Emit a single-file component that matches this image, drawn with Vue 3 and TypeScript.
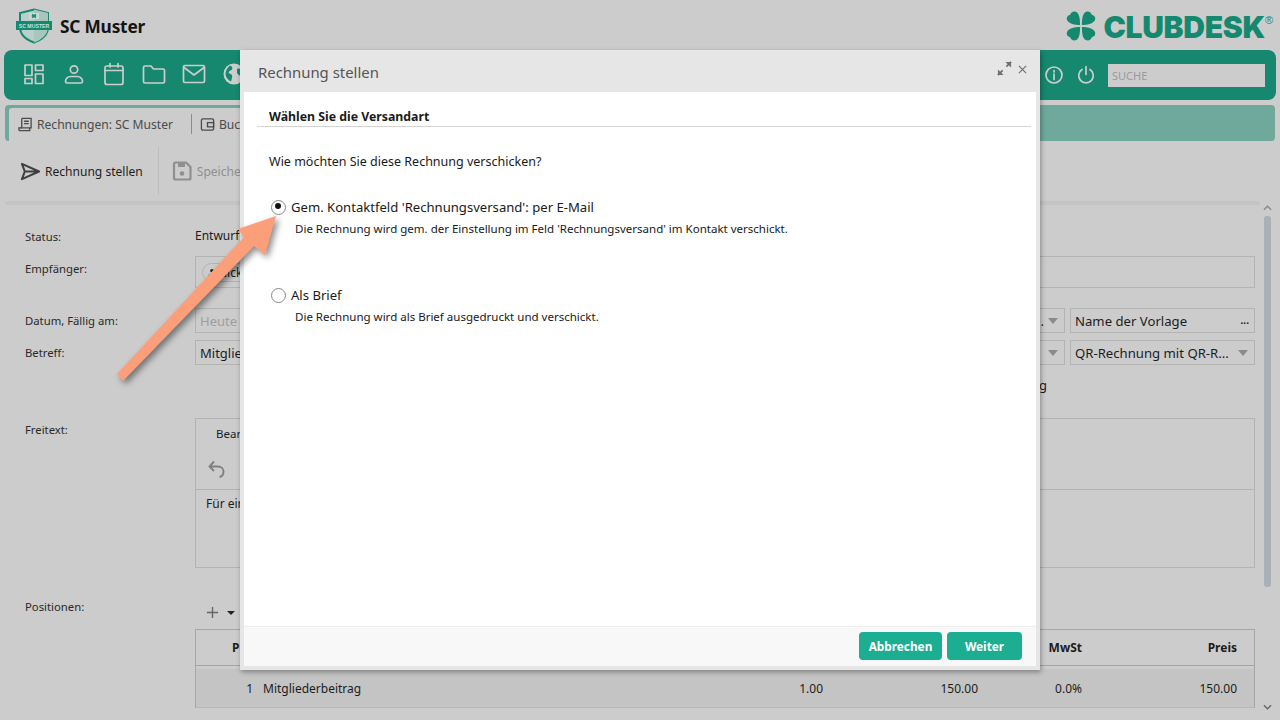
<script setup lang="ts">
const rows = [{ n: 1, name: 'Mitgliederbeitrag', qty: '1.00', unit: '150.00', vat: '0.0%', price: '150.00' }]
</script>

<template>
  <div class="page">
    <header class="top">
      <div class="brand">
        <svg class="shield" viewBox="0 0 38 36" width="38" height="36">
          <path d="M19 1.500 L33 5 V19 C33 27 26 32 19 34.500 C12 32 5 27 5 19 V5 Z" fill="#b9cfc9" stroke="#15896f" stroke-width="2" />
          <path d="M19 1.500 V34.500 C26 32 33 27 33 19 V5 Z" fill="#a9c6be" />
          <path d="M14 5 h10 v6 h-10z" fill="#cfd8d5" />
          <path d="M17 6.500 l4 3 M21 6.500 l-4 3" stroke="#15896f" stroke-width="1.600" />
          <rect x="1" y="13" width="36" height="9" fill="#15896f" />
          <text x="19" y="20" text-anchor="middle" class="shield-text">SC MUSTER</text>
        </svg>
        <span class="club">SC Muster</span>
      </div>
      <div class="clubdesk">
        <svg viewBox="0 0 32 32" width="30" height="30" class="clover">
          <g fill="#15896f">
            <path d="M15 15 C9 15 4 14 1.500 10.500 C-0.500 7 2 4.500 4.500 4 C5 1.500 8 -0.500 11 1 C14.500 3 15 9 15 15Z" />
            <path d="M17 15 C23 15 28 14 30.500 10.500 C32.500 7 30 4.500 27.500 4 C27 1.500 24 -0.500 21 1 C17.500 3 17 9 17 15Z" />
            <path d="M15 17 C9 17 4 18 1.500 21.500 C-0.500 25 2 27.500 4.500 28 C5 30.500 8 32.500 11 31 C14.500 29 15 23 15 17Z" />
            <path d="M17 17 C23 17 28 18 30.500 21.500 C32.500 25 30 27.500 27.500 28 C27 30.500 24 32.500 21 31 C17.500 29 17 23 17 17Z" />
          </g>
        </svg>
        <span class="cd-word">CLUBDESK</span><span class="cd-reg">®</span>
      </div>
    </header>

    <nav class="nav">
      <div class="nav-icons">
        <svg viewBox="0 0 24 24" width="24" height="24"><path d="M3 3h7v10.500H3zM13.500 3H21v5.500h-7.500zM13.500 12H21v9.500h-7.500zM3 16.500h7v5H3z" /></svg>
        <svg viewBox="0 0 24 24" width="24" height="24"><circle cx="12" cy="7.500" r="3.700" /><path d="M3.500 19.500c0-3 2.500-5 5-5h7c2.500 0 5 2 5 5 0 1-.7 1.500-1.500 1.500H5c-.8 0-1.500-.5-1.500-1.500z" /></svg>
        <svg viewBox="0 0 24 24" width="24" height="24"><rect x="3" y="4" width="18" height="18.500" rx="2" /><path d="M3 8.500h18M8 1.500v3.500M16 1.500v3.500" /></svg>
        <svg viewBox="0 0 24 24" width="24" height="24"><path d="M1.500 5.500c0-1 .7-1.500 1.500-1.500h6l2.500 3H21c1 0 1.500.7 1.500 1.500v11c0 1-.7 1.500-1.500 1.500H3c-1 0-1.500-.7-1.500-1.500z" /></svg>
        <svg viewBox="0 0 24 24" width="24" height="24"><rect x="1.500" y="3.500" width="21" height="17" rx="1.500" /><path d="M2 5.500l10 7.500L22 5.500" /></svg>
        <svg viewBox="0 0 24 24" width="24" height="24" class="solid"><circle cx="12" cy="12" r="10.500" /><path class="land" d="M8 3.500c2 1 3 2 2 4l-3 2c-1 1 0 2 1.500 2.500 1.500.5 2 2 1.500 4l-1 3.500c-3-1.500-5-4-5.500-7 0-4 2-7 4.500-9zM15 7c2-1 4 0 6 2l1 3-2 2c-2 0-4-1-5-3z" /></svg>
      </div>
      <div class="nav-right">
        <svg viewBox="0 0 20 20" width="20" height="20"><circle cx="10" cy="10" r="8" /><path d="M10 9v5.500M10 5.500v1.500" /></svg>
        <svg viewBox="0 0 20 20" width="20" height="20"><path d="M6 4.500a7.300 7.300 0 1 0 8 0M10 1.500v8" /></svg>
        <div class="search">SUCHE</div>
      </div>
    </nav>

    <div class="tabs">
      <div class="tab active">
        <svg viewBox="0 0 16 16" width="15" height="15"><path d="M4 1.500h10v10H2.500" /><path d="M4 1.500v10M1 14.500h11.500v-3M1 14.500v-3h3M6.500 4.500h5M6.500 7h5" /></svg>
        <span>Rechnungen: SC Muster</span>
      </div>
      <div class="tab second-tab">
        <svg viewBox="0 0 16 16" width="15" height="15"><rect x="1.500" y="2" width="13" height="12" rx="1.500" /><rect x="8" y="6" width="6.500" height="4.500" /></svg>
        <span>Buc</span>
      </div>
    </div>

    <div class="toolbar">
      <button class="tool">
        <svg viewBox="0 0 22 20" width="21" height="19"><path d="M2 2l18 8-18 8 3-8zM5 10h15" /></svg>
        <span>Rechnung stellen</span>
      </button>
      <button class="tool muted">
        <svg viewBox="0 0 20 20" width="20" height="20"><path d="M2 3c0-1 .6-1.500 1.500-1.500H14L18.500 6v11c0 1-.6 1.500-1.500 1.500H3.500C2.600 18.500 2 18 2 17z" /><rect x="6" y="2" width="7" height="4" class="fillbox" /><circle cx="10" cy="12.500" r="2.300" class="fillbox" /></svg>
        <span>Speichern</span>
      </button>
    </div>
    <div class="rule"></div>

    <main class="form">
      <label class="lbl status-l">Status:</label>
      <div class="status-v">Entwurf</div>

      <label class="lbl">Empfänger:</label>
      <div class="field recipient">
        <span class="chip">
          <svg viewBox="0 0 10 10" width="9" height="9"><circle cx="5.500" cy="3" r="2" /><path d="M1.500 9c0-2 1.500-3 4-3s3 1 3 3z" /></svg>
          Nick Muster
        </span>
      </div>

      <label class="lbl">Datum, Fällig am:</label>
      <div class="split">
        <div class="field small placeholder">Heute</div>
        <div class="field small select narrow"><span class="tail">.</span></div>
        <div class="field small tmpl"><span>Name der Vorlage</span><span class="dots">...</span></div>
      </div>

      <label class="lbl">Betreff:</label>
      <div class="split">
        <div class="field small">Mitgliederbeitrag</div>
        <div class="field small select narrow"></div>
        <div class="field small select tmpl"><span>QR-Rechnung mit QR-R...</span></div>
      </div>

      <div></div>
      <div class="check-row">g</div>

      <label class="lbl free">Freitext:</label>
      <div class="editor">
        <div class="ed-menu">Bearbeiten</div>
        <div class="ed-tools">
          <svg viewBox="0 0 20 20" width="20" height="20"><path d="M7 2.500L2.500 7.500 7 12M2.500 7.500H11c3.500 0 5.500 2.500 5.500 5s-1.500 5-4 5.500" /></svg>
        </div>
        <div class="ed-text">Für ein gutes Vereinsjahr</div>
      </div>

      <label class="lbl pos-l">Positionen:</label>
      <div class="pos">
        <div class="pos-tools">
          <svg viewBox="0 0 14 14" width="13" height="13"><path d="M7 1v12M1 7h12" /></svg>
          <span class="caret"></span>
        </div>
        <div class="table">
          <div class="t-row t-head">
            <span class="c-n">Pos</span><span class="c-name"></span><span class="c-qty"></span><span class="c-unit"></span><span class="c-vat">MwSt</span><span class="c-price">Preis</span>
          </div>
          <div v-for="r in rows" :key="r.n" class="t-row t-body">
            <span class="c-n">{{ r.n }}</span><span class="c-name">{{ r.name }}</span><span class="c-qty">{{ r.qty }}</span><span class="c-unit">{{ r.unit }}</span><span class="c-vat">{{ r.vat }}</span><span class="c-price">{{ r.price }}</span>
          </div>
        </div>
      </div>
    </main>

    <svg class="scroll-up" viewBox="0 0 10 6" width="9" height="6"><path d="M1 5l4-4 4 4" /></svg>
    <div class="scroll-thumb"></div>
    <svg class="scroll-down" viewBox="0 0 10 6" width="9" height="6"><path d="M1 1l4 4 4-4" /></svg>

    <section class="dialog">
      <div class="d-head">
        <span>Rechnung stellen</span>
        <div class="d-actions">
          <svg viewBox="0 0 16 16" width="15" height="15"><path d="M1 15l5-5M15 1l-5 5" stroke-width="1.800" /><path d="M1 15v-6l6 6zM15 1v6l-6-6z" class="solidfill" /></svg>
          <svg class="d-close" viewBox="0 0 10 10" width="9" height="9"><path d="M1 1l8 8M9 1l-8 8" /></svg>
        </div>
      </div>
      <div class="d-body">
        <h2 class="d-title">Wählen Sie die Versandart</h2>
        <p class="d-q">Wie möchten Sie diese Rechnung verschicken?</p>
        <div class="opt first">
          <span class="radio on"></span>
          <span class="opt-l">Gem. Kontaktfeld 'Rechnungsversand': per E-Mail</span>
          <span class="opt-d">Die Rechnung wird gem. der Einstellung im Feld 'Rechnungsversand' im Kontakt verschickt.</span>
        </div>
        <div class="opt second">
          <span class="radio"></span>
          <span class="opt-l">Als Brief</span>
          <span class="opt-d">Die Rechnung wird als Brief ausgedruckt und verschickt.</span>
        </div>
      </div>
      <div class="d-foot">
        <button class="btn b1">Abbrechen</button>
        <button class="btn b2">Weiter</button>
      </div>
    </section>

    <svg class="arrow" viewBox="0 0 1280 720" width="1280" height="720">
      <polygon points="276,216 238,229 244,237 117,374 123,381 254,246 265,255" />
    </svg>
  </div>
</template>

<style>
html, body { margin: 0; background: #ccc; }
</style>

<style scoped>
.page {
  position: relative;
  width: 1280px;
  height: 720px;
  overflow: hidden;
  background: #cccccc;
  font-family: "Noto Sans", "Open Sans", sans-serif;
  color: #1c1c1c;
  font-size: 12px;
  display: flex;
  flex-direction: column;
}
.top { height: 50px; display: flex; justify-content: space-between; align-items: center; padding: 0 7px 0 15px; box-sizing: border-box; flex: none; }
.brand { display: flex; align-items: center; gap: 7px; padding-top: 2px; }
.shield-text { font: 800 5.200px "Liberation Sans", sans-serif; fill: #cde0da; }
.club { font-size: 17.300px; font-weight: 700; color: #141414; letter-spacing: -0.2px; }
.clubdesk { display: flex; align-items: flex-start; height: 31px; padding-top: 3px; }
.clover { margin-right: 7px; }
.cd-word { font-family: "Inter", sans-serif; font-weight: 900; font-size: 30px; line-height: 30px; color: #15896f; letter-spacing: -0.3px; margin-top: 1px; }
.cd-reg { font-size: 11px; line-height: 12px; color: #15896f; margin-top: 3px; font-family: "Liberation Sans", sans-serif; }

.nav { flex: none; height: 50px; margin: 0 4px; border-radius: 8px; background: #15886f; display: flex; justify-content: space-between; align-items: center; padding: 0 11px 0 18px; }
.nav svg { fill: none; stroke: #cdcdcd; stroke-width: 1.700; stroke-linejoin: round; stroke-linecap: round; }
.nav-icons { display: flex; gap: 16px; margin-top: -3px; }
.nav .solid { fill: #cdcdcd; stroke: none; }
.nav .solid .land { fill: #15886f; }
.nav-right { display: flex; align-items: center; gap: 12px; }
.search { width: 157px; height: 23px; background: #cccccc; color: #9a9a9a; font-size: 11px; line-height: 23px; padding-left: 4px; box-sizing: border-box; }

.tabs { flex: none; height: 36px; margin: 5px 5px 0; background: #6fa99c; border-radius: 4px; display: flex; }
.tab { display: flex; align-items: center; gap: 4px; padding: 0 0 0 9px; color: #4b4b4b; font-size: 12.100px; background: #cccccc; box-sizing: border-box; height: 33px; margin-top: 3px; white-space: nowrap; overflow: hidden; }
.tab svg { fill: none; stroke: #4c4c4c; stroke-width: 1.400; flex: none; }
.tab.active { margin-left: 4px; width: 182px; border-radius: 3px 0 0 0; }
.second-tab { position: relative; width: 200px; }
.second-tab::before { content: ""; position: absolute; left: 0; top: 6px; height: 20px; width: 1px; background: #8c8c8c; }

.toolbar { flex: none; height: 60px; display: flex; align-items: center; padding-left: 10px; }
.rule { flex: none; height: 4px; margin: 0 20px 0 5px; background: #c4c4c4; border-radius: 2px; }
.tool { height: 48px; background: none; border: none; font: inherit; font-size: 12.050px; color: #1e1e1e; display: flex; align-items: center; gap: 4px; padding: 0 15px 0 10px; }
.tool svg { fill: none; stroke: #3f3f3f; stroke-width: 2.200; stroke-linejoin: round; }
.tool.muted { color: #8f8f8f; border-left: 1px solid #bdbdbd; padding-left: 13px; gap: 5px; }
.tool.muted svg { stroke: #8f8f8f; }
.tool .fillbox { fill: #8f8f8f; stroke: none; }

.form { display: grid; grid-template-columns: 170px 1060px; padding: 23px 0 0 25px; font-size: 11.300px; }
.lbl { color: #2a2a2a; line-height: 16px; padding-top: 5px; }
.lbl.status-l { grid-row: 1; padding-top: 1px; }
.lbl.free { padding-top: 4px; }
.status-v { height: 22px; line-height: 16px; font-size: 12px; margin-bottom: 6px; }
.field { border: 1px solid #b3b3b3; box-sizing: border-box; padding-left: 4px; font-size: 13px; display: flex; align-items: center; }
.recipient { height: 32px; margin-bottom: 20px; }
.chip { border: 1px solid #b3b3b3; border-radius: 10px; padding: 0 8px 0 4px; margin-left: 2px; font-size: 12px; display: flex; align-items: center; gap: 2px; }
.chip svg { fill: #222; }
.split { display: grid; grid-template-columns: 310px 555px 185px; gap: 5px; margin-bottom: 7px; }
.small { height: 25px; }
.placeholder { color: #9e9e9e; }
.select { position: relative; }
.select::after { content: ""; position: absolute; right: 6px; top: 9px; border: 5px solid transparent; border-top: 6px solid #8a8a8a; border-bottom: 0; }
.narrow { justify-content: flex-end; padding-right: 20px; }
.tmpl { justify-content: space-between; padding-right: 5px; font-size: 13.150px; }
.dots { font-size: 10px; font-weight: 700; margin-top: -2px; }
.check-row { height: 46px; padding-top: 4px; box-sizing: border-box; text-align: right; padding-right: 208px; font-size: 13px; }
.editor { height: 150px; border: 1px solid #b3b3b3; box-sizing: border-box; display: flex; flex-direction: column; }
.ed-menu { height: 32px; padding: 7px 0 0 20px; box-sizing: border-box; font-size: 11.500px; }
.ed-tools { height: 39px; border-bottom: 1px solid #b3b3b3; padding: 8px 0 0 11px; box-sizing: border-box; }
.ed-tools svg { fill: none; stroke: #808080; stroke-width: 1.900; }
.ed-text { padding: 5px 10px; font-size: 12px; }
.lbl.pos-l { margin-top: 31px; padding-top: 0; }
.pos { margin-top: 30px; }
.pos-tools { height: 31px; display: flex; align-items: center; gap: 8px; padding: 0 0 2px 11px; box-sizing: border-box; }
.pos-tools svg { fill: none; stroke: #666; stroke-width: 1.500; }
.caret { border: 4px solid transparent; border-top: 4px solid #222; border-bottom: 0; }
.table { border-left: 1px solid #a6a6a6; border-top: 1px solid #a6a6a6; border-right: 1px solid #a6a6a6; }
.t-row { display: grid; grid-template-columns: 60px 440px 127px 155px 104px 172px; align-items: center; font-size: 12px; }
.t-head { height: 35px; font-weight: 700; border-bottom: 1px solid #a6a6a6; margin-bottom: 3px; }
.t-body { height: 38px; background: #c4c4c4; border-bottom: 1px solid #b8b8b8; }
.c-n { text-align: right; padding-right: 3px; }
.t-head .c-n { overflow: hidden; white-space: nowrap; direction: ltr; text-align: left; padding-left: 36px; }
.c-name { padding-left: 7px; }
.c-qty, .c-unit, .c-vat, .c-price { text-align: right; }
.c-price { padding-right: 17px; }
.scroll-thumb { position: absolute; left: 1264px; top: 216px; width: 7px; height: 371px; background: #a9b0b8; border-radius: 3px; }
.scroll-up { position: absolute; left: 1263px; top: 205px; fill: none; stroke: #8a8a8a; stroke-width: 1.500; }
.scroll-down { position: absolute; left: 1263px; top: 704px; fill: none; stroke: #666; stroke-width: 1.500; }

.dialog { position: absolute; left: 240px; top: 50px; width: 800px; height: 620px; background: #e6e6e6; box-shadow: 1px 2px 5px rgba(0,0,0,.35); display: flex; flex-direction: column; padding: 0 4px 4px; box-sizing: border-box; font-size: 12px; color: #1a1a1a; }
.d-head { height: 42px; flex: none; display: flex; justify-content: space-between; align-items: center; padding: 2px 13px 0 18px; font-size: 14.900px; color: #555; margin: 0 -4px; box-sizing: border-box; }
.d-actions { display: flex; align-items: center; gap: 6px; margin-top: -7px; }
.d-actions svg { fill: none; stroke: #6f6f6f; stroke-width: 1.300; }
.d-actions .solidfill { fill: #6f6f6f; stroke: none; }
.d-actions .d-close { margin-top: 2px; }
.d-body { flex: 1; background: #fff; padding: 0 0 0 25px; position: relative; }
.d-title { margin: 0 5px 0 -12px; padding: 16px 0 1px 12px; font-size: 12.300px; line-height: 17px; font-weight: 700; border-bottom: 1px solid #d4d4d4; }
.d-q { margin: 26px 0 0; font-size: 12.500px; line-height: 18px; }
.opt { display: grid; grid-template-columns: 22px 1fr; column-gap: 0; align-items: center; }
.opt.first { margin-top: 27px; }
.opt.second { margin-top: 49px; }
.radio { width: 15px; height: 15px; box-sizing: border-box; border: 1.700px solid #888; border-radius: 50%; margin-left: 2px; background: #fff; position: relative; }
.radio.on::after { content: ""; position: absolute; left: 2.800px; top: 2.800px; width: 6px; height: 6px; border-radius: 50%; background: #111; }
.opt-l { font-size: 13.100px; line-height: 18px; }
.opt-d { grid-column: 2; font-size: 11.530px; line-height: 16px; margin: 5px 0 0 4px; }
.d-foot { height: 40px; flex: none; background: #f8f8f8; border-top: 1px solid #eee; box-sizing: border-box; display: flex; justify-content: flex-end; align-items: center; gap: 5px; padding: 0 14px 2px 0; }
.btn { height: 28px; border: none; border-radius: 4px; background: #1bae91; color: #fff; font: inherit; font-weight: 700; font-size: 11.800px; padding: 0; }
.b1 { width: 83px; }
.b2 { width: 75px; }
.arrow { position: absolute; inset: 0; pointer-events: none; filter: drop-shadow(3px 3px 3px rgba(0,0,0,.45)); }
.arrow polygon { fill: #fb9f7b; }
</style>
